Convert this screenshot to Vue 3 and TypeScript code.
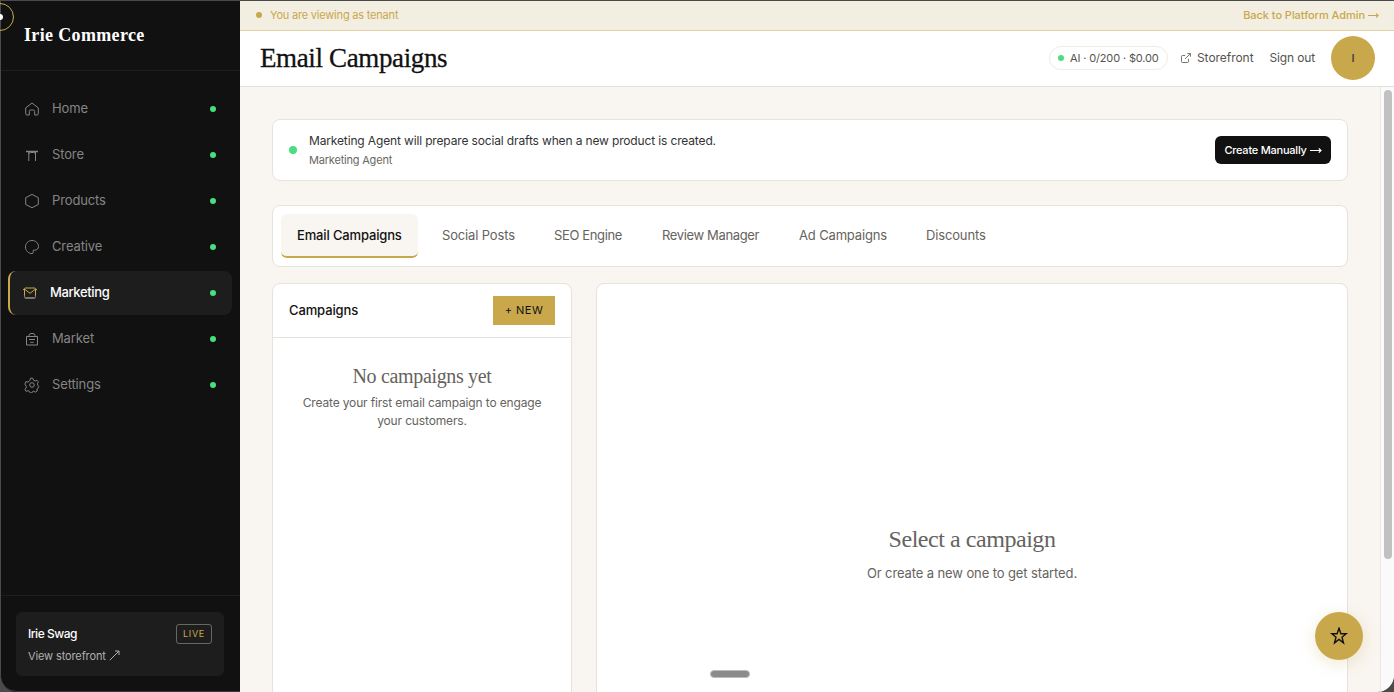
<script setup lang="ts">
interface NavItem {
  label: string
  icon: string
  active?: boolean
}

const navItems: NavItem[] = [
  { label: 'Home', icon: 'home' },
  { label: 'Store', icon: 'store' },
  { label: 'Products', icon: 'products' },
  { label: 'Creative', icon: 'creative' },
  { label: 'Marketing', icon: 'marketing', active: true },
  { label: 'Market', icon: 'market' },
  { label: 'Settings', icon: 'settings' },
]

const tabs: string[] = [
  'Email Campaigns',
  'Social Posts',
  'SEO Engine',
  'Review Manager',
  'Ad Campaigns',
  'Discounts',
]
</script>

<template>
  <div class="desktop">
    <div class="window">
      <aside class="sidebar">
        <div class="brand"><span>Irie Commerce</span></div>
        <nav class="nav">
          <a v-for="item in navItems" :key="item.label" class="nav-item" :class="{ active: item.active }">
            <svg class="nav-icon" viewBox="0 0 16 16" fill="none" stroke="currentColor" stroke-width="1">
              <path v-if="item.icon === 'home'" stroke-linejoin="round" d="M1.700 6.900 8 2l6.300 4.900V12.700q0 1.300-1.300 1.300h-2.300v-3.500q0-1.500-1.400-1.500H6.700q-1.400 0-1.400 1.500V14H3q-1.300 0-1.300-1.300Z" />
              <g v-else-if="item.icon === 'store'">
                <path d="M2 4.500h12" stroke-width="1.300" />
                <path d="M4.800 5v9M11.500 5v9M4.800 7.200q0-1.700 1.700-1.700h3.300q1.700 0 1.700 1.700" />
              </g>
              <path v-else-if="item.icon === 'products'" stroke-linejoin="round" d="M8 1.400 14.300 4.700v6.800L8 14.700 1.700 11.500V4.700Z" />
              <path v-else-if="item.icon === 'creative'" d="M8.300 14.600C4.500 14.600 1.500 11.700 1.500 8S4.400 1.500 8 1.500s6.500 2.700 6.500 5.800c0 2.700-1.700 3.900-4 3.900H9.200v1.400q.2 2-.9 2Z" />
              <g v-else-if="item.icon === 'marketing'">
                <path d="M2.500 11V4q0-1 1-1h9q1 0 1 1v7M1 4.500h1.500M13.500 4.500H15" />
                <path d="m2.800 4.300 5.200 4 5.200-4" />
                <path class="mail-base" d="M2.500 10.500V12q0 1.500 1.500 1.500h8q1.500 0 1.500-1.500v-1.500M3.200 12.500h9.600" />
              </g>
              <path v-else-if="item.icon === 'market'" d="M2.500 5.500h11v8.500h-11ZM5 5.500V4.700Q5 2.500 7 2.500h2q2 0 2 2.200v.8M5 8.500h6M6.300 11.300h3.400" />
              <g v-else>
                <circle cx="8" cy="8" r="2.300" />
                <path stroke-linejoin="round" d="M6.600 1.200h2.200l.7 2 1.600.8 2-.7 1.300 1.500-1 1.900.4 1.600 1 1-1 2.400-.9.300.3 2-1.700 1.200-1.800-1-1.300.5-.6 1.300H6.200l-.7-1.600-1.500-.7-2 .6-1.100-2 1.300-1.500v-1.600L.9 7.200l1-2.600 2.100.5 1.700-1.300Z" />
              </g>
            </svg>
            <span class="nav-label">{{ item.label }}</span>
            <i class="status-dot"></i>
          </a>
        </nav>
        <div class="sidebar-foot">
          <div class="shop">
            <div class="shop-row">
              <span class="shop-name">Irie Swag</span>
              <span class="live">LIVE</span>
            </div>
            <a class="shop-link">
              <span>View storefront</span>
              <svg width="11" height="11" viewBox="0 0 11 11" fill="none" stroke="currentColor"><path d="M.8 10.200 10 1M6 1h4v4" /></svg>
            </a>
          </div>
        </div>
      </aside>

      <main class="main">
        <div class="tenant-bar">
          <i class="tenant-dot"></i>
          <span class="tenant-text">You are viewing as tenant</span>
          <a class="back-link">
            <span>Back to Platform Admin</span>
            <svg width="11" height="7" viewBox="0 0 11 7" fill="none" stroke="currentColor" stroke-width="1.100"><path d="M0 3.500h10M8 1.300l2.200 2.200L8 5.700" /></svg>
          </a>
        </div>
        <header class="topbar">
          <h1>Email Campaigns</h1>
          <div class="usage"><i></i><span>AI · 0/200 · $0.00</span></div>
          <a class="store-link">
            <svg width="10" height="10" viewBox="0 0 10 10" fill="none" stroke="currentColor" stroke-width=".8"><path d="M4.200 2.500H1.500q-1 0-1 1v5q0 1 1 1h5q1 0 1-1V5.800M4 6 9.400.6M6.300.6h3.100v3.100" /></svg>
            <span>Storefront</span>
          </a>
          <a class="sign-out">Sign out</a>
          <div class="avatar">I</div>
        </header>
        <div class="body">
          <div class="content">
            <section class="notice">
              <i class="notice-dot"></i>
              <div class="notice-copy">
                <p class="notice-title">Marketing Agent will prepare social drafts when a new product is created.</p>
                <p class="notice-sub">Marketing Agent</p>
              </div>
              <button class="create">
                <span>Create Manually</span>
                <svg width="12" height="7" viewBox="0 0 12 7" fill="none" stroke="currentColor" stroke-width="1.200"><path d="M0 3.500h11M8.800 1.300 11 3.500 8.800 5.700" /></svg>
              </button>
            </section>
            <nav class="tabs">
              <a v-for="(tab, i) in tabs" :key="tab" class="tab" :class="{ active: i === 0 }">{{ tab }}</a>
            </nav>
            <div class="columns">
              <section class="panel list">
                <div class="list-head">
                  <h2>Campaigns</h2>
                  <button class="new">+ NEW</button>
                </div>
                <div class="list-empty">
                  <h3>No campaigns yet</h3>
                  <p>Create your first email campaign to engage<br />your customers.</p>
                </div>
              </section>
              <section class="panel detail">
                <h3>Select a campaign</h3>
                <p>Or create a new one to get started.</p>
              </section>
            </div>
          </div>
          <div class="scroll-track"><div class="scroll-thumb"></div></div>
        </div>
      </main>
      <div class="drag-handle"></div>
      <button class="fab">
        <svg width="18" height="18" viewBox="0 0 18 18" fill="none" stroke="currentColor" stroke-width="1.400"><path d="m9 1.200 1.900 5.500h5.300l-4.200 3.500 1.500 5.700L9 12.500l-4.500 3.400L6 10.200 1.800 6.700h5.300Z" /></svg>
      </button>
    </div>
    <div class="corner-ring"><i></i></div>
  </div>
</template>

<style>
html,
body {
  margin: 0;
  overflow: hidden;
}
</style>

<style scoped>
* {
  box-sizing: border-box;
}
h1, h2, h3, p {
  margin: 0;
  font-weight: 400;
}
button {
  border: 0;
  padding: 0;
  font: inherit;
}
svg {
  display: block;
  flex: none;
}
i {
  display: block;
  flex: none;
  border-radius: 50%;
}
.desktop {
  position: relative;
  height: 692px;
  overflow: hidden;
  background: #4b4b4b;
  font-family: Inter, "Open Sans", sans-serif;
  white-space: nowrap;
}
.window {
  position: relative;
  display: flex;
  height: 692px;
  overflow: hidden;
  border-top: 1px solid #4a4a4a;
  border-left: 1px solid #4a4a4a;
  border-radius: 0 0 17px 17px;
  background: #111;
}
.sidebar {
  display: flex;
  flex-direction: column;
  flex: none;
  width: 239px;
  border-bottom: 1px solid #3c3c3c;
  border-radius: 0 0 0 16px;
  background: #111;
}
.brand {
  flex: none;
  height: 70px;
  padding: 20px 0 0 23px;
  border-bottom: 1px solid #1e1e1e;
  color: #fff;
  font: 700 18px/28px "Liberation Serif", serif;
  letter-spacing: 0.35px;
}
.nav {
  display: flex;
  flex: 1;
  flex-direction: column;
  gap: 2px;
  padding: 16px 8px 0 7px;
}
.nav-item {
  display: flex;
  align-items: center;
  gap: 12px;
  height: 44px;
  padding: 0 16px;
  border-radius: 8px;
  color: #858585;
  font-size: 13px;
  letter-spacing: -0.13px;
}
.nav-item.active {
  padding-left: 12px;
  border-left: 2px solid #c9a84c;
  background: #1d1d1d;
  color: #fff;
  font-weight: 500;
  letter-spacing: -0.37px;
}
.nav-icon {
  width: 16px;
  height: 16px;
}
.active .nav-icon {
  color: #c9a84c;
}
.mail-base {
  stroke: #77746c;
}
.nav-label {
  flex: 1;
  padding-bottom: 2px;
}
.status-dot {
  width: 6px;
  height: 6px;
  background: #4ade80;
}
.sidebar-foot {
  flex: none;
  height: 96px;
  padding: 16px 16px 0 15px;
  border-top: 1px solid #1e1e1e;
}
.shop {
  height: 64px;
  padding: 12px;
  border-radius: 6px;
  background: #1d1d1d;
}
.shop-row {
  display: flex;
  align-items: center;
  justify-content: space-between;
  height: 20px;
}
.shop-name {
  padding-bottom: 2px;
  color: #fff;
  font-size: 12px;
  font-weight: 500;
  letter-spacing: -0.47px;
}
.live {
  width: 36px;
  height: 20px;
  border: 1px solid #6a6760;
  border-radius: 3px;
  color: #c9a84c;
  font-size: 9px;
  line-height: 17px;
  text-align: center;
  letter-spacing: 0.7px;
}
.shop-link {
  display: flex;
  align-items: center;
  gap: 3px;
  height: 23px;
  color: #b0b0b0;
  font-size: 11px;
  letter-spacing: -0.12px;
}
.main {
  display: flex;
  flex: 1;
  flex-direction: column;
  min-width: 0;
  background: #f9f5f0;
}
.tenant-bar {
  display: flex;
  flex: none;
  align-items: center;
  height: 30px;
  padding: 0 15px 1px 16px;
  border-bottom: 1px solid #e4d4a4;
  background: #f3eee2;
  color: #c9a84c;
  font-size: 11px;
  letter-spacing: -0.2px;
}
.tenant-dot {
  width: 6px;
  height: 6px;
  margin-right: 8px;
  background: #c9a84c;
}
.back-link {
  display: flex;
  align-items: center;
  gap: 3px;
  margin-left: auto;
  font-weight: 500;
  letter-spacing: -0.05px;
}
.topbar {
  display: flex;
  flex: none;
  align-items: center;
  height: 56px;
  padding: 0 19px 2px 20px;
  border-bottom: 1px solid #e4e0da;
  background: #fff;
  color: #55534f;
  font-size: 12px;
  letter-spacing: -0.04px;
}
h1 {
  flex: 1;
  color: #111;
  font: 400 27px/40px "Liberation Serif", serif;
  letter-spacing: -0.37px;
  -webkit-text-stroke: 0.3px #111;
}
.usage {
  display: flex;
  align-items: center;
  gap: 6px;
  width: 119px;
  height: 24px;
  padding-left: 8px;
  border: 1px solid #f0ece2;
  border-radius: 12px;
  font-size: 11px;
  letter-spacing: -0.14px;
}
.usage i {
  width: 6px;
  height: 6px;
  background: #4ade80;
}
.store-link {
  display: flex;
  align-items: center;
  gap: 6px;
  margin: 0 16px 0 13px;
}
.sign-out {
  letter-spacing: -0.15px;
}
.avatar {
  width: 44px;
  height: 44px;
  margin-left: 16px;
  border-radius: 50%;
  background: #c9a84c;
  color: #444;
  font-size: 11px;
  font-weight: 600;
  line-height: 44px;
  text-align: center;
}
.body {
  display: flex;
  flex: 1;
  min-height: 0;
}
.content {
  display: flex;
  flex: 1;
  flex-direction: column;
  padding: 32px 32px 0;
}
.notice,
.tabs,
.panel {
  border: 1px solid #e6e2dc;
  border-radius: 8px;
  background: #fff;
}
.notice {
  display: flex;
  flex: none;
  align-items: center;
  height: 62px;
  padding: 0 16px;
}
.notice-dot {
  width: 8px;
  height: 8px;
  margin-right: 12px;
  background: #4ade80;
}
.notice-copy {
  flex: 1;
}
.notice-title {
  color: #333;
  font-size: 12px;
  line-height: 20px;
  letter-spacing: -0.145px;
}
.notice-sub {
  color: #6b6862;
  font-size: 11px;
  line-height: 18px;
  letter-spacing: -0.2px;
}
.create {
  display: flex;
  align-items: center;
  justify-content: center;
  gap: 3px;
  width: 116px;
  height: 28px;
  border-radius: 6px;
  background: #111;
  color: #fff;
  font-size: 11px;
  font-weight: 500;
  letter-spacing: -0.23px;
}
.tabs {
  display: grid;
  flex: none;
  grid-template-columns: 137px 104px 100px 129px 119px auto;
  justify-content: start;
  gap: 8px;
  height: 62px;
  margin: 24px 0 16px;
  padding: 8px;
}
.tab {
  height: 44px;
  padding: 0 16px;
  border-bottom: 2px solid transparent;
  border-radius: 6px;
  color: #66635e;
  font-size: 13px;
  line-height: 43px;
  letter-spacing: -0.15px;
}
.tab:nth-child(3),
.tab:nth-child(4) {
  letter-spacing: -0.36px;
}
.tab.active {
  border-bottom-color: #c9a84c;
  background: #f9f5f0;
  color: #111;
  font-weight: 500;
}
.columns {
  display: flex;
  flex: none;
  gap: 24px;
}
.panel {
  height: 520px;
}
.list {
  width: 300px;
}
.list-head {
  display: flex;
  align-items: center;
  justify-content: space-between;
  height: 54px;
  padding: 0 16px;
  border-bottom: 1px solid #e6e2dc;
}
h2 {
  padding-bottom: 1px;
  color: #111;
  font-size: 13px;
  font-weight: 500;
  letter-spacing: -0.12px;
}
.new {
  width: 62px;
  height: 29px;
  padding-bottom: 1px;
  background: #c9a84c;
  color: #111;
  font-size: 11px;
  letter-spacing: 0.45px;
}
.list-empty {
  padding-top: 24px;
  text-align: center;
}
h3 {
  color: #66635e;
  font-family: "Liberation Serif", serif;
}
.list-empty h3 {
  font-size: 20px;
  line-height: 28px;
  letter-spacing: -0.34px;
}
.list-empty p {
  padding-top: 4px;
  color: #66635e;
  font-size: 12px;
  line-height: 18px;
  letter-spacing: -0.145px;
}
.detail {
  flex: 1;
  padding-top: 238px;
  text-align: center;
}
.detail h3 {
  font-size: 24px;
  line-height: 34px;
  letter-spacing: -0.45px;
}
.detail p {
  padding-top: 7px;
  color: #66635e;
  font-size: 13px;
  line-height: 20px;
  letter-spacing: -0.11px;
}
.scroll-track {
  flex: none;
  width: 14px;
  padding: 3px 0 0 3px;
  border-left: 1px solid #e8e8e8;
  background: #fafafa;
}
.scroll-thumb {
  width: 8px;
  height: 469px;
  border-radius: 4px;
  background: #c1c1c1;
}
.corner-ring {
  position: absolute;
  top: 3px;
  left: -14px;
  width: 28px;
  height: 28px;
  border: 1px solid #c9a84c;
  border-radius: 50%;
}
.corner-ring i {
  position: absolute;
  top: 10px;
  left: 10px;
  width: 6px;
  height: 6px;
  background: #fff;
}
.drag-handle {
  position: absolute;
  top: 669px;
  left: 709px;
  width: 40px;
  height: 8px;
  border: 1px solid #bbb;
  border-radius: 4px;
  background: #8b8b8b;
}
.fab {
  position: absolute;
  top: 611px;
  left: 1314px;
  display: flex;
  align-items: center;
  justify-content: center;
  width: 48px;
  height: 48px;
  border-radius: 50%;
  background: #c9a84c;
  box-shadow: 0 4px 16px rgba(201, 168, 76, 0.25);
  color: #111;
}
</style>
